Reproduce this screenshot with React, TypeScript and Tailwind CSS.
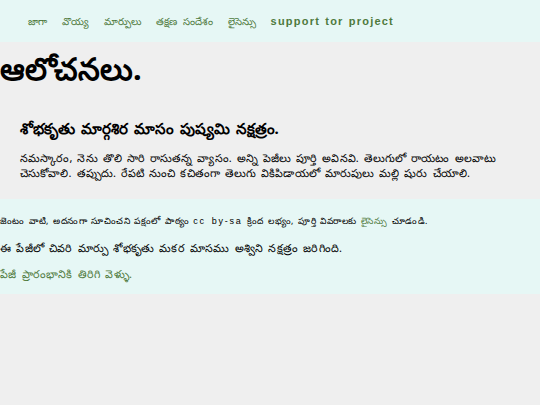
const navItems = ["జాగా", "వొయ్య", "మార్పులు", "తక్షణ సందేశం", "లైసెన్సు"];

export default function App() {
  return (
    <div className="min-h-[405px] bg-[#efefef] text-black [font-family:'Noto_Sans','Liberation_Sans',sans-serif]">
      <header className="flex h-[42px] items-center gap-[15px] bg-[#e6f7f5] pl-[28px] text-[10px] text-[#4f7a3d] [word-spacing:3px]">
        {navItems.map((item) => (
          <a key={item} href="#" className="hover:underline">
            {item}
          </a>
        ))}
        <a
          href="#"
          className="text-[11px] font-bold tracking-[0.11em] [font-family:'Liberation_Sans',sans-serif] [word-spacing:1px]"
        >
          support tor project
        </a>
      </header>

      <main className="pb-[10px]">
        <h1 className="pt-[6px] text-[31px] leading-[40px] font-bold">ఆలోచనలు.</h1>
        <article className="px-[20px] pt-[29px]">
          <h2 className="text-[15px] leading-[22px] font-bold [word-spacing:2px]">
            శోభకృతు మార్గశిర మాసం పుష్యమి నక్షత్రం.
          </h2>
          <p className="mt-[11px] whitespace-nowrap text-[11px] leading-[15px] tracking-[0.01em] [word-spacing:2px]">
            నమస్కారం, నెను తొలి సారి రాసుతన్న వ్యాసం. అన్ని పెజీలు పూర్తి అవినవి. తెలుగులో రాయటం అలవాటు
            <br />
            చెసుకోవాలి. తప్పుదు. రేపటి నుంచి కచితంగా తెలుగు వికిపిడాయలో మారుపులు మల్లి షురు చేయాలి.
          </p>
        </article>
      </main>

      <footer className="mt-[9px] bg-[#e6f7f5] pt-[12px] pb-[10px]">
        <p className="text-[9px] leading-[20px] tracking-[0.05em] [word-spacing:1.5px]">
          జెంటం వాటి, అదనంగా సూచించని పక్షంలో పాఠ్యం{" "}
          <span className="tracking-[0.2em] [font-family:'Liberation_Sans',sans-serif]">cc by-sa</span> క్రింద
          లభ్యం, పూర్తి వివరాలకు{" "}
          <a href="#" className="text-[#4f7a3d]">
            లైసెన్సు
          </a>{" "}
          చూడండి.
        </p>
        <p className="mt-[7px] text-[11px] leading-[20px] tracking-[0.02em] [word-spacing:2px]">
          ఈ పేజీలో చివరి మార్పు శోభకృతు మకర మాసము అశ్విని నక్షత్రం జరిగింది.
        </p>
        <p className="mt-[6px] text-[11px] leading-[20px] tracking-[0.02em] [word-spacing:2px]">
          <a href="#" className="text-[#4f7a3d]">
            పేజీ ప్రారంభానికి తిరిగి వెళ్ళు.
          </a>
        </p>
      </footer>
    </div>
  );
}
